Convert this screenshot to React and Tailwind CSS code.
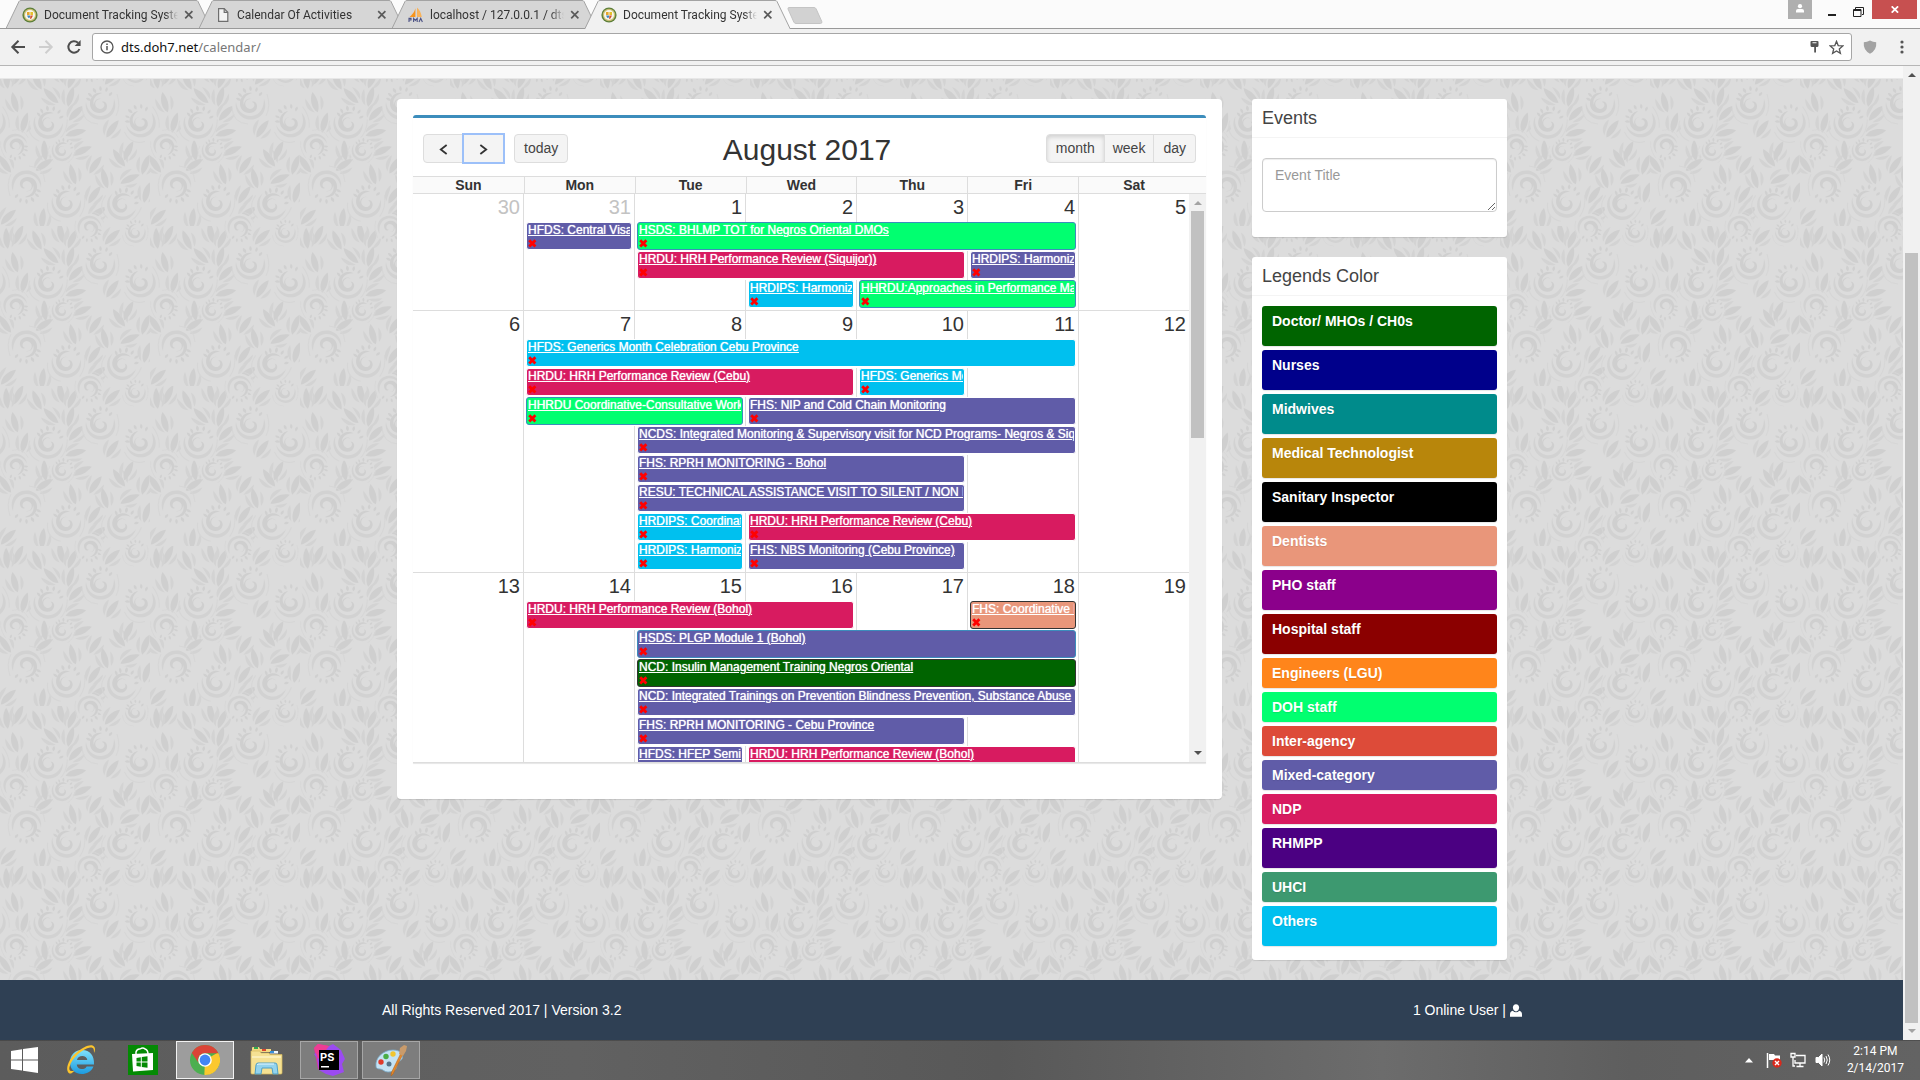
import React from 'react';

const PURPLE = 'bg-[#605ca8] border-white';
const PINK = 'bg-[#d81b60] border-white';
const CYAN = 'bg-[#00c0ef] border-white';
const LIME = 'bg-[#01ff70] border-[#3c8dbc]';

/* Each event row lists cells as [first column, span, title, colours]; gaps stay empty. */
const WEEKS = [
  {
    days: [30, 31, 1, 2, 3, 4, 5],
    muted: 2,
    rows: [
      [[1, 1, 'HFDS: Central Visayas', PURPLE], [2, 4, 'HSDS: BHLMP TOT for Negros Oriental DMOs', LIME]],
      [[2, 3, 'HRDU: HRH Performance Review (Siquijor))', PINK], [5, 1, 'HRDIPS: Harmonization', PURPLE]],
      [[3, 1, 'HRDIPS: Harmonization', CYAN], [4, 2, 'HHRDU:Approaches in Performance Management', LIME]],
    ],
  },
  {
    days: [6, 7, 8, 9, 10, 11, 12],
    muted: 0,
    rows: [
      [[1, 5, 'HFDS: Generics Month Celebration Cebu Province', CYAN]],
      [[1, 3, 'HRDU: HRH Performance Review (Cebu)', PINK], [4, 1, 'HFDS: Generics Month', CYAN]],
      [[1, 2, 'HHRDU Coordinative-Consultative Workshop', LIME], [3, 3, 'FHS: NIP and Cold Chain Monitoring', PURPLE]],
      [[2, 4, 'NCDS: Integrated Monitoring & Supervisory visit for NCD Programs- Negros & Siquijor', PURPLE]],
      [[2, 3, 'FHS: RPRH MONITORING - Bohol', PURPLE]],
      [[2, 3, 'RESU: TECHNICAL ASSISTANCE VISIT TO SILENT / NON REPORTING', PURPLE]],
      [[2, 1, 'HRDIPS: Coordination', CYAN], [3, 3, 'HRDU: HRH Performance Review (Cebu)', PINK]],
      [[2, 1, 'HRDIPS: Harmonization', CYAN], [3, 2, 'FHS: NBS Monitoring (Cebu Province)', PURPLE]],
    ],
  },
  {
    days: [13, 14, 15, 16, 17, 18, 19],
    muted: 0,
    rows: [
      [[1, 3, 'HRDU: HRH Performance Review (Bohol)', PINK], [5, 1, 'FHS: Coordinative Meeting', 'bg-[#e9967a] border-[#333333]']],
      [[2, 4, 'HSDS: PLGP Module 1 (Bohol)', 'bg-[#605ca8] border-[#3c8dbc]']],
      [[2, 4, 'NCD: Insulin Management Training Negros Oriental', 'bg-[#006400] border-[#333333]']],
      [[2, 4, 'NCD: Integrated Trainings on Prevention Blindness Prevention, Substance Abuse', PURPLE]],
      [[2, 3, 'FHS: RPRH MONITORING - Cebu Province', PURPLE]],
      [[2, 1, 'HFDS: HFEP Seminar', PURPLE], [3, 3, 'HRDU: HRH Performance Review (Bohol)', PINK]],
    ],
  },
];

const LEGENDS = [
  ['Doctor/ MHOs / CH0s', 'bg-[#006400] h-10'],
  ['Nurses', 'bg-[#00008b] h-10'],
  ['Midwives', 'bg-[#008b8b] h-10'],
  ['Medical Technologist', 'bg-[#b8860b] h-10'],
  ['Sanitary Inspector', 'bg-black h-10'],
  ['Dentists', 'bg-[#e9967a] h-10'],
  ['PHO staff', 'bg-[#8b008b] h-10'],
  ['Hospital staff', 'bg-[#8b0000] h-10'],
  ['Engineers (LGU)', 'bg-[#ff851b] h-[30px]'],
  ['DOH staff', 'bg-[#01ff70] h-[30px]'],
  ['Inter-agency', 'bg-[#dd4b39] h-[30px]'],
  ['Mixed-category', 'bg-[#605ca8] h-[30px]'],
  ['NDP', 'bg-[#d81b60] h-[30px]'],
  ['RHMPP', 'bg-[#4b0082] h-10'],
  ['UHCI', 'bg-[#3d9970] h-[30px]'],
  ['Others', 'bg-[#00c0ef] h-10'],
];

/* ---------- Browser chrome ---------- */

function SealIcon() {
  return (
    <svg width="16" height="16" viewBox="0 0 16 16" aria-hidden="true">
      <circle cx="8" cy="8" r="7.6" fill="#5d7f3a" />
      <circle cx="8" cy="8" r="6.2" fill="#c9bf74" />
      <circle cx="8" cy="8" r="5" fill="#f7f6ea" />
      <path d="M5 5h2.6v3H5z" fill="#e6a42a" />
      <path d="M8.4 5H11v3H8.4z" fill="#e6c02a" />
      <path d="M5 8.4h3v2L6.4 11z" fill="#3f87c7" />
      <path d="M8.4 8.4H11L9.4 11.4 8 12z" fill="#d3502f" />
    </svg>
  );
}

function PageIcon() {
  return (
    <svg width="16" height="16" viewBox="0 0 16 16" fill="none" stroke="#6e6e6e" strokeWidth="1.2" aria-hidden="true">
      <path d="M3.6 1.6h5.6l3.6 3.7v9.1H3.6z" fill="#f4f4f4" />
      <path d="M9.2 1.6v3.7h3.6" />
    </svg>
  );
}

function PmaIcon() {
  return (
    <svg width="16" height="16" viewBox="0 0 16 16" aria-hidden="true">
      <path d="M7.4 1.2V10H1.6C3.6 7.800 6.300 5.800 7.400 1.200z" fill="#f7941d" />
      <path d="M9 .4c2.700 2.600 4.200 5.800 4.800 9.600H9z" fill="#f9b35a" />
      <path d="M1 15v-3.600h2v1.600H1M5.600 15v-3.600l1.800 2 1.800-2V15M11 15l1.700-3.600 1.700 3.600" fill="none" stroke="#4d5385" strokeWidth="1.100" />
    </svg>
  );
}

function Tab({ icon, title, active, first }) {
  const fill = active ? '#f1f1f1' : '#d6d6d6';
  return (
    <div className={`relative h-[29px] w-[207px] shrink-0 ${first ? '' : '-ml-[14px]'} ${active ? 'z-10' : ''}`}>
      <svg className="absolute inset-0 h-full w-full" viewBox="0 0 207 29" preserveAspectRatio="none" aria-hidden="true">
        <path d="M0 29 L13 1.500 Q13.500 .5 15 .5 H190 Q191.500 .5 192 1.500 L205 29z" fill={fill} />
        <path d="M0 28.500 L13 1.500 Q13.500 .5 15 .5 H190 Q191.500 .5 192 1.500 L205 28.500" fill="none" stroke="#a3a3a3" />
        {!active && <path d="M0 28.500H207" stroke="#999999" />}
      </svg>
      <div className="relative flex h-full items-center pl-4">
        {icon}
        <span className="ml-[6px] w-[134px] overflow-hidden whitespace-nowrap font-[Roboto,sans-serif] text-[12px] leading-[16px] text-[#333333] [mask-image:linear-gradient(to_right,black_90%,transparent)]">{title}</span>
        <button type="button" aria-label={`Close ${title}`} className="ml-[6px]">
          <svg width="10" height="10" viewBox="0 0 10 10" stroke="#5a5a5a" strokeWidth="1.700" aria-hidden="true">
            <path d="M1.200 1.200l7.200 7.200M8.400 1.200L1.200 8.400" />
          </svg>
        </button>
      </div>
    </div>
  );
}

function TabStrip() {
  return (
    <header className="relative flex h-[29px] bg-[#fbfbfb] pl-[6px] shadow-[inset_0_-1px_0_#999999]">
      <Tab first icon={<SealIcon />} title="Document Tracking System" />
      <Tab icon={<PageIcon />} title="Calendar Of Activities" />
      <Tab icon={<PmaIcon />} title="localhost / 127.0.0.1 / dts | phpMyAdmin" />
      <Tab active icon={<SealIcon />} title="Document Tracking System" />
      <button type="button" aria-label="New tab" className="-ml-[5px] mt-[7px] h-[17px]">
        <svg width="36" height="17" viewBox="0 0 36 17" aria-hidden="true">
          <path d="M2 .5H27Q28.500 .5 29.200 2L34.800 14.500Q35.300 16.500 33.500 16.500H9Q7.500 16.500 6.800 15L1 2Q.7 .5 2 .5z" fill="#d2d2d2" stroke="#c4c4c4" />
        </svg>
      </button>
      <div className="ml-auto flex pr-[3px]">
        <button type="button" aria-label="Profile" className="flex h-[19px] w-6 justify-center bg-[#afafaf] pt-1">
          <svg width="10" height="9" viewBox="0 0 10 9" fill="#fff" aria-hidden="true">
            <circle cx="5" cy="2.200" r="2.100" />
            <path d="M1 8.500V7Q1 5 3 5H7Q9 5 9 7V8.500z" />
          </svg>
        </button>
        <button type="button" aria-label="Minimize" className="ml-4 h-[19px] w-2 pt-[11px]">
          <span className="block h-[2px] w-2 bg-[#222222]" />
        </button>
        <button type="button" aria-label="Restore" className="ml-[17px] h-[19px] pt-1">
          <svg className="block" width="11" height="10" viewBox="0 0 11 10" fill="none" stroke="#222" aria-hidden="true">
            <path d="M2.500 2V.5H10.500V7.500H9" />
            <path d="M.5 2.500H8V9.500H.5zM.5 3.500H8" />
          </svg>
        </button>
        <button type="button" aria-label="Close" className="ml-[8px] flex h-[19px] w-[45px] items-center justify-center bg-[#c75050]">
          <svg width="8" height="7" viewBox="0 0 8 7" stroke="#fff" strokeWidth="1.700" aria-hidden="true">
            <path d="M.7 .3l6.400 6.400M7.100 .3L.7 6.700" />
          </svg>
        </button>
      </div>
    </header>
  );
}

function AddressBar() {
  return (
    <div className="flex h-[37px] items-center border-b border-[#b6b6b6] bg-[#f1f1f1] pl-[10px] pr-4">
      <button type="button" aria-label="Back">
        <svg width="16" height="16" viewBox="0 0 16 16" fill="none" stroke="#4d4d4d" strokeWidth="2" aria-hidden="true"><path d="M15 8H2.500M8.500 1.800L2.300 8l6.200 6.200" /></svg>
      </button>
      <button type="button" aria-label="Forward" className="ml-3">
        <svg width="16" height="16" viewBox="0 0 16 16" fill="none" stroke="#cecece" strokeWidth="2" aria-hidden="true"><path d="M1 8h12.500M7.500 1.800L13.700 8l-6.200 6.200" /></svg>
      </button>
      <button type="button" aria-label="Reload" className="ml-3">
        <svg width="16" height="16" viewBox="0 0 16 16" fill="none" stroke="#4d4d4d" strokeWidth="2" aria-hidden="true">
          <path d="M13.400 10A5.700 5.700 0 1 1 12 3.800" />
          <path d="M14.600 1v6H8.600z" fill="#4d4d4d" stroke="none" />
        </svg>
      </button>
      <div className="ml-[10px] flex h-7 flex-1 items-center rounded-[3px] border border-[#a6a6a6] bg-white pl-[7px] pr-[7px]">
        <svg width="14" height="14" viewBox="0 0 14 14" fill="none" stroke="#555" aria-hidden="true">
          <circle cx="7" cy="7" r="6" strokeWidth="1.300" />
          <path d="M7 6v4.200M7 3.400v1.500" strokeWidth="1.500" />
        </svg>
        <div className="ml-[7px] flex-1 text-[13px] leading-[18px] text-[#777777]"><span className="text-[#111111]">dts.doh7.net</span>/calendar/</div>
        <svg width="9" height="14" viewBox="0 0 9 14" fill="#555" aria-hidden="true">
          <path d="M1.500 1h6Q8.500 1 8.500 2v3.500Q8.500 7 7 7H6v5.500H4.200V7H2Q.5 7 .5 5.500V2Q.5 1 1.500 1zM2.500 2.300v1h4v-1z" />
        </svg>
        <svg className="ml-[10px]" width="15" height="15" viewBox="0 0 15 15" fill="none" stroke="#555" strokeWidth="1.300" aria-hidden="true">
          <path d="M7.500 1.300l1.700 4.300 4.600.300-3.500 3 1.100 4.500-3.900-2.500-3.900 2.500 1.100-4.500-3.500-3 4.600-.300z" />
        </svg>
      </div>
      <svg className="ml-[11px]" width="14" height="14" viewBox="0 0 14 14" fill="#a3a3a3" aria-hidden="true">
        <path d="M7 .5q3 1.600 6.200 1.700Q14 10 7 13.700 0 10 .8 2.200 4 2.100 7 .5z" />
      </svg>
      <button type="button" aria-label="Menu" className="ml-[23px]">
        <svg width="4" height="14" viewBox="0 0 4 14" fill="#555" aria-hidden="true">
          <circle cx="2" cy="2" r="1.600" /><circle cx="2" cy="7" r="1.600" /><circle cx="2" cy="12" r="1.600" />
        </svg>
      </button>
    </div>
  );
}

/* ---------- Wallpaper ---------- */

const SWIRLS = [
  [100, 38, 1, 0], [48, 57, 1, 20], [140, 56, 1, -20], [-10, 56, 1, -20], [16, 80, 0.8, 160], [62, 84, 0.7, 30],
  [27, 120, 1, 180], [66, 136, 1, 10], [122, 138, 1, 40], [90, 162, 0.8, 170], [90, 2, 0.8, 170], [135, 6, 0.7, 0], [135, 166, 0.7, 0],
];
const LEAVES = [
  [18, 8, 20], [36, 14, -30], [70, 30, 10], [76, 46, 40], [76, 66, 70], [14, 36, -20], [24, 56, 10], [112, 62, 30], [118, 92, -40],
  [95, 98, 30], [82, 84, 60], [145, 98, 15], [8, 150, 40], [42, 152, 0], [94, 128, 30], [60, 6, -15], [112, 10, 40], [4, 98, -40],
  [104, 112, -20], [44, 98, 50], [146, 126, 10], [72, 108, -20], [72, 12, 20], [50, 30, -50], [128, 84, 20], [44, 84, -10], [98, 146, 50], [6, 12, -10], [130, 112, 60],
];

function Wallpaper() {
  return (
    <svg className="absolute inset-0 h-full w-full" aria-hidden="true">
      <defs>
        <g id="swirl" fill="#cfcfcf">
          <path d="M1-5C-6-6-7 4 0 5 5 5 6-1 2-2 5-4 9 1 6 6 1 12-11 9-10-2-9-9-3-12 2-11-5-9-8-4-6 1-6-3-3-6 1-5z" />
          <path d="M-14-2C-16 9-6 18 5 15 15 12 17 2 14-5 14 4 10 11 2 12-6 13-13 7-14-2z" fill="#d2d2d2" />
          <path d="M-14-6q4-1 5 3-4 0-5-3zM-12-11q4 0 4 4-4-1-4-4zM-7-16q4 1 3 5-4-1-3-5zM0-18q3 2 1 5-3-1-1-5zM7-17q2 3-1 5-2-2 1-5zM12-12q1 3-3 4-1-3 3-4z" fill="#d0d0d0" />
          <path d="M-18 4Q-17 19-2 20M17-10Q21 2 16 12" fill="none" stroke="#d6d6d6" />
        </g>
        <g id="leaf">
          <path d="M0 11C-5 5-3-5 2-10 5-2 4 6 0 11z" fill="#cfcfcf" />
          <path d="M-3 10C-10 6-9-2-7-6-5-1-5 4-3 10zM4 10C10 6 10 0 8-4 7 1 5 4 4 10z" fill="#d3d3d3" />
        </g>
        <pattern id="damask" width="150" height="160" patternUnits="userSpaceOnUse">
          <rect width="150" height="160" fill="#dcdcdc" />
          {LEAVES.map(([x, y, r], i) => (
            <use key={i} href="#leaf" transform={`translate(${x} ${y}) rotate(${r})`} />
          ))}
          {SWIRLS.map(([x, y, s, r], i) => (
            <g key={i} transform={`translate(${x} ${y}) rotate(${r}) scale(${s})`}>
              <circle r="18" fill="#dcdcdc" />
              <use href="#swirl" />
            </g>
          ))}
        </pattern>
      </defs>
      <rect width="100%" height="100%" fill="url(#damask)" />
    </svg>
  );
}

/* ---------- Calendar ---------- */

function Arrow({ up, color }) {
  return (
    <svg width="8" height="4" viewBox="0 0 8 4" fill={color} aria-hidden="true">
      <path d={up ? 'M4 0l4 4H0z' : 'M0 0h8L4 4z'} />
    </svg>
  );
}

function EventCell({ span, title, tone, last }) {
  return (
    <td colSpan={span} className={`border-l border-[#dddddd] px-[2px] align-top ${last ? 'h-[30px]' : 'h-[29px]'}`}>
      <div className={`h-7 overflow-hidden whitespace-nowrap rounded-[3px] border pl-px pr-px ${tone}`}>
        <a href="#event" className="block h-[14px] overflow-hidden text-[12px] leading-[14px] text-white underline [text-shadow:0_0_1px_white]">{title}</a>
        <button type="button" aria-label={`Remove ${title}`} className="block h-3">
          <svg width="9" height="9" viewBox="0 0 9 9" stroke="#ff0000" strokeWidth="2.800" aria-hidden="true">
            <path d="M1.200 1.200l6.200 6.200M7.400 1.200L1.200 7.400" />
          </svg>
        </button>
      </div>
    </td>
  );
}

function EventRow({ cells, last }) {
  const out = [];
  let col = 0;
  const pad = (until) => {
    for (; col < until; col += 1) out.push(<td key={col} className={`${col ? 'border-l' : ''} border-[#dddddd] p-0`} />);
  };
  cells.forEach(([start, span, title, tone]) => {
    pad(start);
    out.push(<EventCell key={start} span={span} title={title} tone={tone} last={last} />);
    col += span;
  });
  pad(7);
  return <tr>{out}</tr>;
}

const BTN = 'h-[29px] border border-[#dddddd] bg-[#f4f4f4] text-[14px] text-[#444444]';

function Chevron({ left }) {
  return (
    <svg className="mt-[3px]" width="9" height="11" viewBox="0 0 10 12" fill="none" stroke="#333" strokeWidth="2" aria-hidden="true">
      <path d={left ? 'M8.500 1L2 6l6.500 5' : 'M1.500 1L8 6l-6.500 5'} />
    </svg>
  );
}

function Calendar() {
  return (
    <section className="min-w-0 flex-1 self-start rounded-[4px] bg-white px-4 pb-9 pt-4 shadow-[0_1px_1px_rgba(0,0,0,0.1)]">
      <div className="rounded-t-[3px] border-b border-t-[3px] border-b-[#dddddd] border-t-[#3c8dbc] shadow-[0_1px_1px_rgba(0,0,0,0.1)]">
        <div className="flex h-[58px] items-center justify-between px-[10px] pt-[2px]">
          <div className="flex">
            <button type="button" aria-label="Previous month" className={`${BTN} flex w-10 items-center justify-center rounded-l-[4px]`}><Chevron left /></button>
            <button type="button" aria-label="Next month" className={`${BTN} flex w-[41px] items-center justify-center outline-2 -outline-offset-1 outline-[#9cc0f9]`}><Chevron /></button>
            <button type="button" className={`${BTN} ml-[10px] rounded-[4px] px-[9px]`}>today</button>
          </div>
          <h2 className="pt-1 text-[30px] leading-[30px] text-[#333333]">August 2017</h2>
          <div className="flex justify-end">
            <button type="button" aria-pressed="true" className={`${BTN} rounded-l-[4px] px-[9px] shadow-[inset_0_2px_4px_rgba(0,0,0,0.15)]`}>month</button>
            <button type="button" className={`${BTN} border-l-0 px-2`}>week</button>
            <button type="button" className={`${BTN} rounded-r-[4px] border-l-0 px-[9px]`}>day</button>
          </div>
        </div>
        <div className="border-y border-[#dddddd] bg-[#fafafa] pr-[17px]">
          <table className="w-full table-fixed border-separate border-spacing-0">
            <thead>
              <tr>
                {['Sun', 'Mon', 'Tue', 'Wed', 'Thu', 'Fri', 'Sat'].map((d) => (
                  <th key={d} scope="col" className="h-4 border-[#dddddd] p-0 text-[14px] font-bold leading-[16px] text-[#333333] [&:not(:first-child)]:border-l">{d}</th>
                ))}
              </tr>
            </thead>
          </table>
        </div>
        <div className="flex h-[568px]">
          <div className="h-full min-w-0 flex-1 overflow-hidden">
            <table className="w-full table-fixed border-separate border-spacing-0" aria-label="August 2017">
              <colgroup>
                <col className="w-[110px]" />
                <col /><col /><col /><col /><col /><col />
              </colgroup>
              {WEEKS.map((week, w) => (
                <tbody key={w}>
                  <tr>
                    {week.days.map((day, i) => (
                      <td key={day} className={`${w ? 'h-[29px] border-t' : 'h-7'} ${i ? 'border-l' : ''} border-[#dddddd] p-0 pr-[3px] pt-[2px] text-right align-top text-[20px] leading-[22px] ${i < week.muted ? 'text-[#c3c3c3]' : 'text-[#333333]'}`}>{day}</td>
                    ))}
                  </tr>
                  {week.rows.map((cells, r) => <EventRow key={r} cells={cells} last={r === week.rows.length - 1} />)}
                </tbody>
              ))}
            </table>
          </div>
          <div className="flex w-[17px] flex-col items-center bg-[#f1f1f1] py-[7px]">
            <Arrow up color="#a3a3a3" />
            <div className="mt-[6px] h-[227px] w-[13px] bg-[#c1c1c1]" />
            <div className="mt-auto"><Arrow color="#505050" /></div>
          </div>
        </div>
      </div>
    </section>
  );
}

/* ---------- Sidebar ---------- */

function Panel({ title, children, className }) {
  return (
    <section className={`rounded-[3px] bg-white shadow-[0_1px_1px_rgba(0,0,0,0.1)] ${className}`}>
      <h3 className="border-b border-[#f4f4f4] px-[10px] py-[10px] text-[18px] leading-[18px] text-[#444444]">{title}</h3>
      {children}
    </section>
  );
}

function Sidebar() {
  return (
    <aside className="flex w-[255px] shrink-0 flex-col gap-5">
      <Panel title="Events" className="pb-[25px]">
        <div className="px-[10px] pt-5">
          <textarea aria-label="Event Title" placeholder="Event Title" className="block h-[54px] w-full resize-y rounded-[4px] border border-[#cccccc] bg-white px-3 py-[6px] text-[14px] leading-[20px] text-[#555555] shadow-[inset_0_1px_1px_rgba(0,0,0,0.075)] placeholder:text-[#999999]" />
        </div>
      </Panel>
      <Panel title="Legends Color" className="pb-[14px]">
        <ul className="flex flex-col gap-1 px-[10px] pt-[10px]">
          {LEGENDS.map(([name, tone]) => (
            <li key={name} className={`rounded-[3px] px-[10px] py-[5px] text-[14px] font-bold leading-[20px] text-white shadow-[0_1px_1px_rgba(0,0,0,0.1)] [text-shadow:0_1px_1px_rgba(0,0,0,0.1)] ${tone}`}>{name}</li>
          ))}
        </ul>
      </Panel>
    </aside>
  );
}

/* ---------- Taskbar ---------- */

function WindowsLogo() {
  return (
    <svg width="27" height="26" viewBox="0 0 27 26" fill="#fff" aria-hidden="true">
      <path d="M0 4l11-1.700V12.500H0zM12 2.100L27 0v12.500H12zM0 13.500h11v10L0 22zM12 13.500h15V26l-15-2.300z" />
    </svg>
  );
}

function IeLogo() {
  return (
    <svg width="30" height="30" viewBox="0 0 30 30" aria-hidden="true">
      <defs>
        <linearGradient id="ie" x1="0" y1="0" x2="0" y2="1"><stop offset="0" stopColor="#7fe0fb" /><stop offset="1" stopColor="#1c9be0" /></linearGradient>
      </defs>
      <path d="M28 19.500H10.800c.3 5.500 8 6 9.800 2h6.800C25.300 27 20.500 29 15.800 29 8.500 29 4 24 4 17.300 4 9.500 9.500 5 16 5c8 0 12.500 5.500 12 14.500zM11 15h10.300c-.5-5.500-9.500-5.500-10.300 0z" fill="url(#ie)" />
      <path d="M3.500 28.500C-2 25 3 13.500 10.500 7.500S25-1.500 28 1.500c1.700 1.700 1 4.500 0 6.500 0-3 .2-6-4-5.500C17 3.500 5.500 13 3.500 22c-.8 3.500 1 4.800 5 3.700-1.700 1.800-3.700 3.300-5 2.800z" fill="#fdc52c" />
    </svg>
  );
}

function StoreLogo() {
  return (
    <svg width="30" height="30" viewBox="0 0 30 30" aria-hidden="true">
      <rect width="30" height="30" fill="#048a04" />
      <path d="M8 9V7q1-3.500 4-3 3-2 5 0 3 1 3 5" fill="none" stroke="#fff" strokeWidth="1.500" />
      <path d="M4 9l21-1v17L5 26.500z" fill="#fff" />
      <path d="M8.500 13l4.300-.7v4.200H8.500zM13.800 12.100l5.700-.9v5.300h-5.700zM8.500 17.500h4.300v4.200l-4.300-.6zM13.800 17.500h5.700v5.200l-5.700-.8z" fill="#048a04" />
    </svg>
  );
}

function ChromeLogo() {
  return (
    <svg width="30" height="30" viewBox="0 0 30 30" aria-hidden="true">
      <circle cx="15" cy="15" r="15" fill="#4caf50" />
      <path d="M15 15L28 7.500A15 15 0 0 1 14.600 30z" fill="#fbc82f" />
      <path d="M14.600 30L21 18.500 15 15z" fill="#fbc82f" />
      <path d="M1.800 7.900A15 15 0 0 1 28.300 8.200H15A6.800 6.800 0 0 0 8.700 18z" fill="#db4437" />
      <circle cx="15" cy="15" r="6.800" fill="#fff" />
      <circle cx="15" cy="15" r="5.400" fill="#4285f4" />
    </svg>
  );
}

function ExplorerLogo() {
  return (
    <svg width="33" height="30" viewBox="0 0 33 30" aria-hidden="true">
      <path d="M2 3q0-1 1-1h6l1 2h11V7H2z" fill="#f3d981" />
      <rect x="4" y="2" width="4" height="2" fill="#2fa84f" />
      <rect x="12" y="4" width="4" height="2" fill="#d8452f" />
      <rect x="20" y="6" width="8" height="2.500" fill="#eef6fb" /><rect x="20" y="6" width="4" height="2" fill="#3690d8" />
      <path d="M1 6h9l1 2h8l1 1.500h12V28q0 1-1 1H2q-1 0-1-1z" fill="#f5e193" stroke="#d6b95b" strokeWidth=".7" />
      <path d="M2 12h29" stroke="#fbf2c4" strokeWidth="1.500" />
      <path d="M5 29l1-9q.3-2 2-2h17q2 0 2 2l1 9h-5l-1-6H12l-1 6z" fill="#92d3ee" stroke="#4f9fc4" />
      <path d="M7 20q.5-1 2-1h15" stroke="#e5f7ff" fill="none" />
    </svg>
  );
}

function PhpStormLogo() {
  return (
    <svg width="32" height="32" viewBox="0 0 32 32" aria-hidden="true">
      <path d="M1 4L5 0l11 2-2 26-9-3z" fill="#e0369c" />
      <path d="M12 4l8-4 8 6 4 9-3 5 2 8-11 4-7-2-7-4-2-12L1 10l6-3z" fill="#9b4bf0" />
      <path d="M1 4L5 0l11 2-6 8-5 5z" fill="#ee3d93" />
      <rect x="6" y="6" width="20" height="20" fill="#000" />
      <text x="7" y="17" fill="#fff" fontSize="11" fontWeight="700" fontFamily="Inter, sans-serif">PS</text>
      <rect x="8" y="22" width="8" height="1.500" fill="#fff" />
    </svg>
  );
}

function PaintLogo() {
  return (
    <svg width="32" height="32" viewBox="0 0 32 32" aria-hidden="true">
      <path d="M1 22C0 14 8 6 18 6c8 0 11 5 9 9-2 3-5 3-5 6 0 4-3 7-9 7-4 0-5-3-8-3-3 0-4-1-4-3z" fill="#c4e2f3" stroke="#7aaccb" strokeWidth=".8" />
      <circle cx="6" cy="18" r="2.700" fill="#df3b2c" /><circle cx="11" cy="12.500" r="2.700" fill="#49ad45" />
      <circle cx="18" cy="10" r="2.700" fill="#f1c52f" /><circle cx="14" cy="20" r="2.500" fill="#55748a" />
      <path d="M26 9l2 1-10 20-2 2 .7-4z" fill="#e58a2c" stroke="#b7651a" strokeWidth=".6" />
      <path d="M24 10l1-6 4-3 3 1-1 5-3 5z" fill="#c99b6b" />
    </svg>
  );
}

const OPEN_APP = 'flex h-[38px] w-[58px] items-center justify-center border';

function Taskbar() {
  return (
    <nav aria-label="Taskbar" className="flex h-10 items-center bg-[linear-gradient(90deg,#5c5c5c_0%,#616161_30%,#585858_52%,#6c6c6c_72%,#5e5e5e_85%,#636363_100%)] shadow-[inset_0_1px_0_rgba(0,0,0,0.2)]">
      <button type="button" aria-label="Start" className="ml-[11px]"><WindowsLogo /></button>
      <button type="button" aria-label="Internet Explorer" className="ml-7"><IeLogo /></button>
      <button type="button" aria-label="Store" className="ml-8"><StoreLogo /></button>
      <button type="button" aria-label="Chrome" className={`${OPEN_APP} ml-[18px] border-[#f2f2f2] bg-[#9d9d9d]`}><ChromeLogo /></button>
      <button type="button" aria-label="File Explorer" className="ml-4"><ExplorerLogo /></button>
      <button type="button" aria-label="PhpStorm" className={`${OPEN_APP} ml-[17px] border-[#a6a6a6] bg-[#7d7d7d]`}><PhpStormLogo /></button>
      <button type="button" aria-label="Paint" className={`${OPEN_APP} ml-1 border-[#a6a6a6] bg-[#7d7d7d]`}><PaintLogo /></button>
      <div className="ml-auto flex items-center pr-4">
        <svg width="8" height="5" viewBox="0 0 8 5" fill="#fff" aria-hidden="true"><path d="M4 0l4 4.500H0z" /></svg>
        <svg className="ml-[13px]" width="16" height="16" viewBox="0 0 16 16" aria-hidden="true">
          <path d="M1.500 1v15" stroke="#fff" strokeWidth="1.500" />
          <path d="M3 2h5l1 1.500h5V9H9L8 8H3z" fill="#fff" />
          <circle cx="11" cy="11" r="4.700" fill="#d9291c" />
          <path d="M9 9l4 4M13 9l-4 4" stroke="#fff" strokeWidth="1.400" />
        </svg>
        <svg className="ml-2" width="16" height="16" viewBox="0 0 16 16" fill="none" stroke="#fff" strokeWidth="1.300" aria-hidden="true">
          <path d="M6 3.500h9v7.500H5V8M10 11v3M6.500 14.500h7" />
          <path d="M1 1.500h4v3.500H1zM3 5v9h2" />
        </svg>
        <svg className="ml-[9px]" width="16" height="16" viewBox="0 0 16 16" fill="none" stroke="#fff" aria-hidden="true">
          <path d="M1 5.500h2.500L7 2v12l-3.500-3.500H1z" fill="#fff" />
          <path d="M9 5.500q1.500 2.500 0 5M11 4q2.500 4 0 8M13 2.500q3.500 5.500 0 11" />
        </svg>
        <time className="ml-4 text-center font-[Roboto,sans-serif] text-[12px] leading-[17px] text-white">2:14 PM<br />2/14/2017</time>
      </div>
    </nav>
  );
}

export default function App() {
  return (
    <div className="flex min-h-screen flex-col bg-[#dcdcdc] font-['Noto_Sans',sans-serif]">
      <TabStrip />
      <AddressBar />
      <div className="flex flex-1 font-['Liberation_Sans',Arial,sans-serif]">
        <div className="relative flex min-w-0 flex-1 flex-col pl-px">
          <Wallpaper />
          <div className="relative -ml-px h-[13px] border-b border-[#e7e7e7] bg-[#f8f8f8]" />
          <main className="relative mx-auto flex w-full max-w-[1110px] flex-1 gap-[30px] pb-5 pt-5">
            <Calendar />
            <Sidebar />
          </main>
          <footer className="relative -ml-px bg-[#2f4054] pl-px">
            <div className="mx-auto flex h-[60px] w-full max-w-[1140px] items-center justify-between text-[14px] text-white">
              <p>All Rights Reserved 2017 | Version 3.2</p>
              <p className="flex items-center gap-1">
                1 Online User |
                <svg width="12" height="13" viewBox="0 0 12 13" fill="#fff" aria-hidden="true">
                  <path d="M6 .3c2 0 3.100 1.500 3.100 3.300C9.100 5.800 7.800 7.500 6 7.500S2.900 5.800 2.900 3.600C2.900 1.800 4 .3 6 .3z" />
                  <path d="M0 12.800V10.500Q0 7.300 2.800 6.800 4 8.300 6 8.300T9.200 6.800Q12 7.300 12 10.500V12.800z" />
                </svg>
              </p>
            </div>
          </footer>
        </div>
        <div className="flex w-[17px] flex-col items-center bg-[#f1f1f1] py-[7px]">
          <Arrow up color="#505050" />
          <div className="mt-[176px] w-[13px] flex-1 bg-[#c1c1c1]" />
          <div className="mt-[6px]"><Arrow color="#a3a3a3" /></div>
        </div>
      </div>
      <Taskbar />
    </div>
  );
}
